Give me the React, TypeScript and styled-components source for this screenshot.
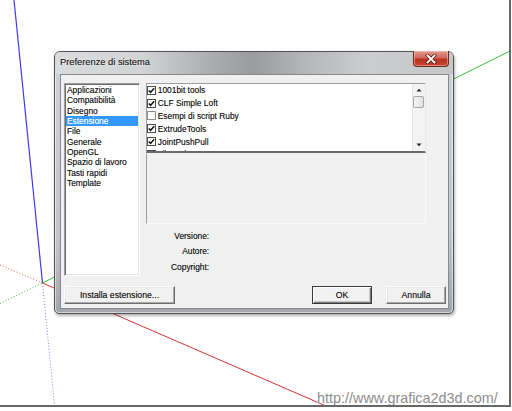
import React from 'react';
import styled, { createGlobalStyle } from 'styled-components';

const Global = createGlobalStyle`
  html, body { margin: 0; padding: 0; background: #fff; }
  body { font-family: "Liberation Sans", Arial, sans-serif; }
  * { box-sizing: border-box; }
`;

const Stage = styled.div`
  position: relative;
  width: 511px;
  height: 407px;
  background: #fff;
  border-right: 2px solid #686868;
  border-bottom: 2px solid #686868;
  overflow: hidden;
`;

const Axes = styled.svg`
  position: absolute;
  left: 0;
  top: 0;
  width: 509px;
  height: 405px;
`;

const Watermark = styled.div`
  position: absolute;
  left: 317px;
  top: 390px;
  font-family: "Liberation Sans", Arial, sans-serif;
  font-size: 14.4px;
  line-height: 16px;
  color: #8d8d8d;
  text-shadow: 0 0 2px #fff, 0 0 2px #fff;
  white-space: nowrap;
`;

const Window = styled.div`
  position: absolute;
  left: 54px;
  top: 51px;
  width: 400px;
  height: 263px;
  border: 1px solid #4e5256;
  border-radius: 6px 6px 5px 5px;
  background: linear-gradient(180deg, #cfd1d3 0%, #c3c5c8 70%, #a4a6a9 100%);
  box-shadow: 1px 2px 3px rgba(0, 0, 0, 0.3), inset 0 0 0 1px rgba(255, 255, 255, 0.55);
  display: flex;
  flex-direction: column;
`;

const TitleBar = styled.div`
  height: 22px;
  display: flex;
  align-items: flex-start;
  border-radius: 5px 5px 0 0;
  background: linear-gradient(
    90deg,
    #dadbdc 0%,
    #d2d3d4 22%,
    #a6a7a8 42%,
    #9a9b9c 50%,
    #b4b5b6 62%,
    #cbcccd 78%,
    #c6c7c8 100%
  );
`;

const Title = styled.div`
  flex: 1;
  padding-left: 5px;
  font-size: 9.3px;
  line-height: 21px;
  color: #1c1c1c;
  text-shadow: 0 0 3px rgba(255, 255, 255, 0.9), 0 0 0.5px rgba(0, 0, 0, 0.5);
  white-space: nowrap;
`;

const CloseButton = styled.div`
  width: 36px;
  height: 16px;
  margin: -1px 4px 0 0;
  border: 1px solid #6b2a22;
  border-top: none;
  border-radius: 0 0 4px 4px;
  background: linear-gradient(180deg, #e3988d 0%, #d06a5c 45%, #b83222 55%, #c8452f 100%);
  box-shadow: inset 0 0 0 1px rgba(255, 220, 210, 0.45);
  display: flex;
  align-items: center;
  justify-content: center;
`;

const Client = styled.div`
  flex: 1;
  margin: 0 4px 4px 5px;
  border: 1px solid #868a8f;
  background: #f0f0f0;
  padding: 8px 2px 4px 3px;
  display: flex;
  flex-direction: column;
  font-size: 8.4px;
  color: #111;
  text-shadow: 0 0 0.5px rgba(0, 0, 0, 0.45);
`;

const MainRow = styled.div`
  display: flex;
  gap: 5.7px;
  height: 193px;
`;

const CategoryList = styled.div`
  width: 76px;
  height: 193px;
  background: #fff;
  border: 1px solid;
  border-color: #a0a0a0 #fff #fff #a0a0a0;
  box-shadow: inset 1px 1px 0 #696969, inset -1px -1px 0 #e3e3e3;
  padding: 1px 1px 0 1px;
`;

const CategoryItem = styled.div<{ $selected?: boolean }>`
  height: 10.33px;
  line-height: 10.33px;
  padding-left: 1px;
  white-space: nowrap;
  background: ${(p) => (p.$selected ? '#3399ff' : 'transparent')};
  color: ${(p) => (p.$selected ? '#fff' : '#111')};
  ${(p) => (p.$selected ? 'text-shadow: 0 0 0.5px rgba(255,255,255,0.6);' : '')}
`;

const RightColumn = styled.div`
  width: 280px;
  display: flex;
  flex-direction: column;
`;

const CheckList = styled.div`
  position: relative;
  height: 70px;
  background: #fff;
  border: 1px solid;
  border-color: #a0a0a0 #e8e8e8 #6a6a6a #a0a0a0;
  border-bottom-width: 2px;
  display: flex;
  overflow: hidden;
`;

const CheckItems = styled.div`
  flex: 1;
  padding-left: 0.6px;
  overflow: hidden;
`;

const CheckRow = styled.div`
  height: 12.8px;
  display: flex;
  align-items: center;
  gap: 1.5px;
  white-space: nowrap;
`;

const Box = styled.span<{ $checked: boolean }>`
  width: 9px;
  height: 9px;
  flex: none;
  border: 1px solid ${(p) => (p.$checked ? '#4a4a4a' : '#8e8f8f')};
  background: #fff;
  display: flex;
  align-items: center;
  justify-content: center;
`;

const ScrollBar = styled.div`
  width: 12.5px;
  display: flex;
  flex-direction: column;
  align-items: center;
  background: #f3f3f3;
  border-left: 1px solid #e6e6e6;
`;

const Arrow = styled.div`
  height: 12px;
  width: 100%;
  display: flex;
  align-items: center;
  justify-content: center;
`;

const Thumb = styled.div`
  width: 11px;
  height: 12px;
  border: 1px solid #a5a5a5;
  border-radius: 2px;
  background: linear-gradient(90deg, #f5f5f5, #e0e0e0);
`;

const Track = styled.div`
  flex: 1;
`;

const Description = styled.div`
  height: 71px;
  background: #f0f0f0;
  border: 1px solid;
  border-color: transparent #fafafa #fafafa #a0a0a0;
`;

const InfoGrid = styled.div`
  margin-top: 4px;
  display: grid;
  grid-template-columns: 63.5px 1fr;
  grid-auto-rows: 15.5px;
  align-items: center;
`;

const InfoLabel = styled.div`
  text-align: right;
  white-space: nowrap;
`;

const ButtonRow = styled.div`
  margin-top: 9.5px;
  display: flex;
  justify-content: space-between;
  align-items: center;
`;

const ButtonGroup = styled.div`
  display: flex;
  gap: 14px;
`;

const Button = styled.div<{ $w: number; $default?: boolean }>`
  width: ${(p) => p.$w}px;
  height: 18.5px;
  display: flex;
  align-items: center;
  justify-content: center;
  font-size: 8.7px;
  color: #111;
  background: #f1f1f1;
  border: 1px solid;
  border-color: ${(p) => (p.$default ? '#3a3a3a' : '#fdfdfd #6e6e6e #6e6e6e #fdfdfd')};
  box-shadow: ${(p) =>
    p.$default
      ? 'inset 1px 1px 0 #fff, inset -1px -1px 0 #7a7a7a, inset -2px -2px 0 #c6c6c6'
      : 'inset -1px -1px 0 #a8a8a8, inset 1px 1px 0 #e8e8e8'};
  white-space: nowrap;
`;

const categories = [
  'Applicazioni',
  'Compatibilità',
  'Disegno',
  'Estensione',
  'File',
  'Generale',
  'OpenGL',
  'Spazio di lavoro',
  'Tasti rapidi',
  'Template',
];

const extensions: [string, boolean][] = [
  ['1001bit tools', true],
  ['CLF Simple Loft', true],
  ['Esempi di script Ruby', false],
  ['ExtrudeTools', true],
  ['JointPushPull', true],
  ['LibFredo6', true],
];

const CheckMark = () => (
  <svg width="7" height="7" viewBox="0 0 7 7">
    <path d="M0.8 3.4 L2.6 5.3 L6.2 1.2" fill="none" stroke="#111" strokeWidth="1.5" />
  </svg>
);

const CloseGlyph = () => (
  <svg width="12" height="10" viewBox="0 0 12 10">
    <path d="M2.5 1.5 L9.5 8.5 M9.5 1.5 L2.5 8.5" stroke="#5a1a12" strokeWidth="3.4" strokeLinecap="square" />
    <path d="M2.5 1.5 L9.5 8.5 M9.5 1.5 L2.5 8.5" stroke="#fff" strokeWidth="1.9" strokeLinecap="square" />
  </svg>
);

const ArrowGlyph = ({ up }: { up?: boolean }) => (
  <svg width="6" height="4" viewBox="0 0 6 4">
    <path d={up ? 'M0.5 3.5 L3 0.8 L5.5 3.5 Z' : 'M0.5 0.5 L3 3.2 L5.5 0.5 Z'} fill="#222" />
  </svg>
);

export default function App() {
  return (
    <>
      <Global />
      <Stage>
        <Axes viewBox="0 0 509 405">
          <line x1="14" y1="0" x2="42.5" y2="283" stroke="#3c3cf2" strokeWidth="1.2" />
          <line x1="42.5" y1="283" x2="54.5" y2="405" stroke="#7c7cff" strokeWidth="1" strokeDasharray="1 2" />
          <line x1="42.5" y1="283" x2="326" y2="406" stroke="#d43434" strokeWidth="1" />
          <line x1="0" y1="265" x2="42.5" y2="283" stroke="#e05a5a" strokeWidth="1" strokeDasharray="1 2" />
          <line x1="42.5" y1="283" x2="509" y2="51.5" stroke="#38c038" strokeWidth="1" />
          <line x1="0" y1="303.5" x2="42.5" y2="283" stroke="#44b844" strokeWidth="1" strokeDasharray="1 2" />
        </Axes>
        <Window>
          <TitleBar>
            <Title>Preferenze di sistema</Title>
            <CloseButton>
              <CloseGlyph />
            </CloseButton>
          </TitleBar>
          <Client>
            <MainRow>
              <CategoryList>
                {categories.map((c) => (
                  <CategoryItem key={c} $selected={c === 'Estensione'}>
                    {c}
                  </CategoryItem>
                ))}
              </CategoryList>
              <RightColumn>
                <CheckList>
                  <CheckItems>
                    {extensions.map(([name, checked]) => (
                      <CheckRow key={name}>
                        <Box $checked={checked}>{checked && <CheckMark />}</Box>
                        <span>{name}</span>
                      </CheckRow>
                    ))}
                  </CheckItems>
                  <ScrollBar>
                    <Arrow>
                      <ArrowGlyph up />
                    </Arrow>
                    <Thumb />
                    <Track />
                    <Arrow>
                      <ArrowGlyph />
                    </Arrow>
                  </ScrollBar>
                </CheckList>
                <Description />
                <InfoGrid>
                  <InfoLabel>Versione:</InfoLabel>
                  <span />
                  <InfoLabel>Autore:</InfoLabel>
                  <span />
                  <InfoLabel>Copyright:</InfoLabel>
                  <span />
                </InfoGrid>
              </RightColumn>
            </MainRow>
            <ButtonRow>
              <Button $w={111}>Installa estensione...</Button>
              <ButtonGroup>
                <Button $w={60} $default>
                  OK
                </Button>
                <Button $w={60}>Annulla</Button>
              </ButtonGroup>
            </ButtonRow>
          </Client>
        </Window>
        <Watermark>http://www.grafica2d3d.com/</Watermark>
      </Stage>
    </>
  );
}
